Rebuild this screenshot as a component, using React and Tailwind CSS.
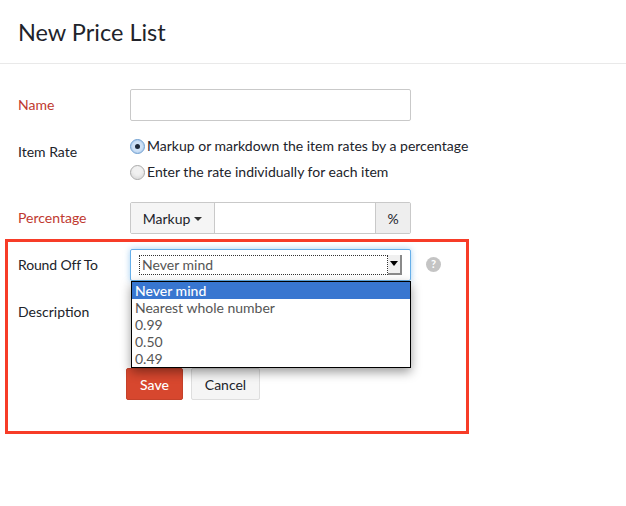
const labelCls = "w-[112px] shrink-0 text-[14px] leading-[20px]";
const options = ["Nearest whole number", "0.99", "0.50", "0.49"];

function Radio({ checked, children }) {
  return (
    <div className="flex h-[26px] items-center">
      <span
        className={
          "flex h-[15px] w-[15px] shrink-0 items-center justify-center rounded-full border " +
          (checked
            ? "border-[#6f9fd0] bg-[#cfe2f7] shadow-[inset_0_0_2px_#8ab4e0]"
            : "border-[#a9a9a9] bg-[#f1f1f1] shadow-[inset_0_-2px_3px_#dcdcdc]")
        }
      >
        {checked && <span className="h-[5px] w-[5px] rounded-full bg-[#1d2a3a]" />}
      </span>
      <span className="ml-[2px] text-[14px] leading-[20px] text-[#21232a]">{children}</span>
    </div>
  );
}

export default function App() {
  return (
    <div className="relative h-[506px] w-[626px] overflow-hidden bg-white font-['Lato','Open_Sans',sans-serif] text-[#21232a]">
      <header className="flex h-[64px] items-center border-b border-[#e9e9e9] pl-[18px]">
        <h1 className="text-[23.5px] font-normal leading-[30px] text-[#21232a]">New Price List</h1>
      </header>

      <form className="pl-[18px] pt-[25px]">
        <div className="flex items-center">
          <label className={labelCls + " text-[#c0392f]"}>Name</label>
          <input className="h-[32px] w-[281px] rounded-[2px] border border-[#c9c9c9] bg-white" />
        </div>

        <div className="mt-[12px] flex items-start">
          <label className={labelCls + " mt-[9px]"}>Item Rate</label>
          <div>
            <Radio checked>Markup or markdown the item rates by a percentage</Radio>
            <Radio>Enter the rate individually for each item</Radio>
          </div>
        </div>

        <div className="mt-[17px] flex items-center">
          <label className={labelCls + " text-[#c0392f]"}>Percentage</label>
          <div className="flex h-[32px] w-[281px] rounded-[2px] border border-[#c9c9c9]">
            <div className="flex w-[83px] items-center justify-center gap-[4px] bg-[#f5f5f5] text-[14px]">
              Markup
              <span className="mt-[1px] h-0 w-0 border-x-[4px] border-t-[4px] border-x-transparent border-t-[#333]" />
            </div>
            <input className="min-w-0 flex-1 border-x border-[#c9c9c9] bg-white" />
            <div className="flex w-[34px] items-center justify-center bg-[#eeeeee] text-[14px]">%</div>
          </div>
        </div>

        <div className="mt-[15px] flex items-center">
          <label className={labelCls + " tracking-[-0.15px]"}>Round Off To</label>
          <div className="relative flex h-[32px] w-[281px] items-center rounded-[2px] border border-[#66afe9] pl-[8px] pr-[8px] shadow-[0_0_6px_rgba(102,175,233,0.6)]">
            <div className="mb-[1px] flex h-[20px] flex-1 items-center border border-dotted border-[#333] pl-[2px] text-[14px] text-[#555]">
              Never mind
            </div>
            <div className="mb-[1px] flex h-[20px] w-[14px] items-center justify-center border-b-2 border-r-2 border-[#8a8a8a] bg-[#f0f0f0]">
              <span className="h-0 w-0 border-x-[4px] border-t-[5px] border-x-transparent border-t-black" />
            </div>
            <ul className="absolute left-0 top-[31px] z-10 w-[280px] border border-black bg-white text-[14px] leading-[17px] text-[#555] shadow-[0_4px_10px_rgba(0,0,0,0.4)]">
              <li className="bg-[#3876d0] pl-[3px] font-medium text-white">Never mind</li>
              {options.map((o) => (
                <li key={o} className="pl-[3px]">{o}</li>
              ))}
            </ul>
          </div>
          <span className="mb-[1px] ml-[15px] flex h-[15px] w-[15px] items-center justify-center rounded-full bg-[#c4c4c4] text-[11px] font-bold text-white">?</span>
        </div>

        <div className="mt-[21px] flex h-[20px] items-center">
          <label className={labelCls}>Description</label>
        </div>

        <div className="ml-[108px] mt-[46px] flex gap-[8px]">
          <button type="button" className="h-[32px] w-[57px] rounded-[2px] border border-[#c5412a] bg-[#d7472e] text-[14px] font-medium text-white">Save</button>
          <button type="button" className="h-[32px] w-[69px] rounded-[2px] border border-[#dedede] bg-[#f5f5f5] text-[14px] text-[#21232a]">Cancel</button>
        </div>
      </form>

      {/* red highlight drawn over the form */}
      <div className="pointer-events-none absolute left-[5px] top-[239px] z-20 h-[195px] w-[464px] border-[3px] border-[#f73c28]" />
    </div>
  );
}
